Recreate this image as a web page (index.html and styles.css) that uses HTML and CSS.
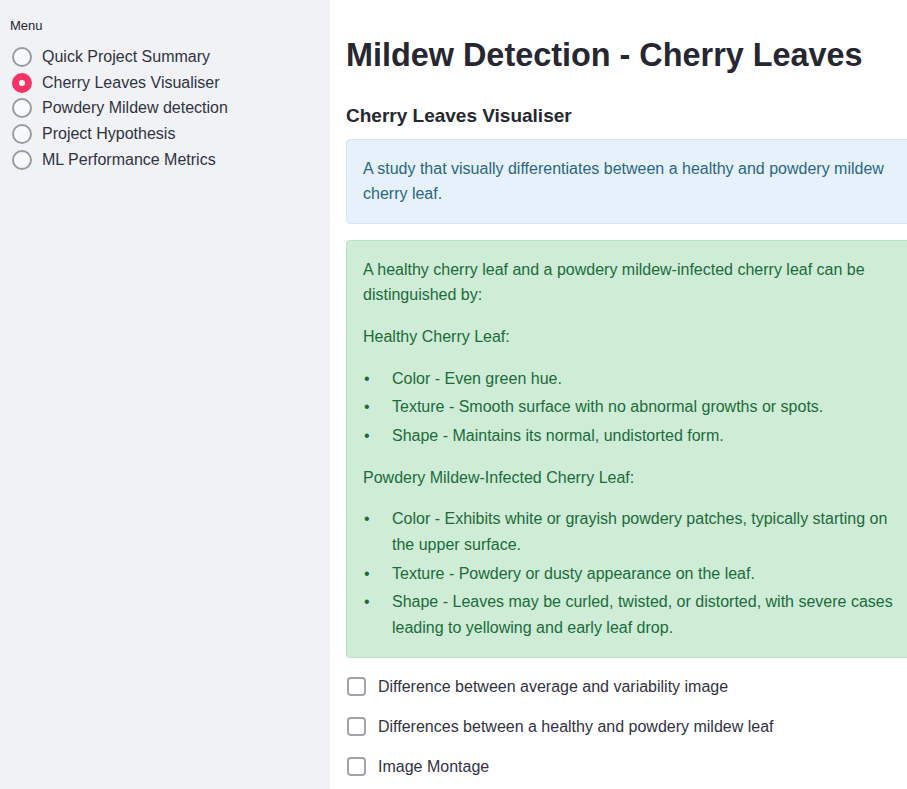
FILE: index.html
```html
<!DOCTYPE html>
<html lang="en">
<head>
<meta charset="utf-8">
<title>Mildew Detection - Cherry Leaves</title>
<link rel="stylesheet" href="styles.css">
</head>
<body>
<aside class="sidebar">
  <div class="menu-label">Menu</div>
  <div class="radio-group">
    <label class="radio"><span class="radio-dot"></span>Quick Project Summary</label>
    <label class="radio selected"><span class="radio-dot"></span>Cherry Leaves Visualiser</label>
    <label class="radio"><span class="radio-dot"></span>Powdery Mildew detection</label>
    <label class="radio"><span class="radio-dot"></span>Project Hypothesis</label>
    <label class="radio"><span class="radio-dot"></span>ML Performance Metrics</label>
  </div>
</aside>
<main class="main">
  <div class="content">
    <h1 class="title">Mildew Detection - Cherry Leaves</h1>
    <h3 class="subheader">Cherry Leaves Visualiser</h3>
    <div class="alert info">
      <p>A study that visually differentiates between a healthy and powdery mildew<br>cherry leaf.</p>
    </div>
    <div class="alert success">
      <p>A healthy cherry leaf and a powdery mildew-infected cherry leaf can be<br>distinguished by:</p>
      <p>Healthy Cherry Leaf:</p>
      <ul>
        <li><span>Color - Even green hue.</span></li>
        <li><span>Texture - Smooth surface with no abnormal growths or spots.</span></li>
        <li><span>Shape - Maintains its normal, undistorted form.</span></li>
      </ul>
      <p>Powdery Mildew-Infected Cherry Leaf:</p>
      <ul>
        <li><span>Color - Exhibits white or grayish powdery patches, typically starting on<br>the upper surface.</span></li>
        <li><span>Texture - Powdery or dusty appearance on the leaf.</span></li>
        <li><span>Shape - Leaves may be curled, twisted, or distorted, with severe cases<br>leading to yellowing and early leaf drop.</span></li>
      </ul>
    </div>
    <div class="checks">
      <label class="check"><span class="check-box"></span>Difference between average and variability image</label>
      <label class="check"><span class="check-box"></span>Differences between a healthy and powdery mildew leaf</label>
      <label class="check"><span class="check-box"></span>Image Montage</label>
    </div>
  </div>
</main>
</body>
</html>
```
FILE: styles.css
```css
html, body {
  margin: 0;
  padding: 0;
  height: 100%;
}
body {
  display: flex;
  overflow: hidden;
  font-family: "Liberation Sans", Arial, sans-serif;
  color: #262730;
  background: #ffffff;
}
.sidebar {
  flex: 0 0 330px;
  width: 330px;
  background: #f0f2f6;
  padding: 18px 0 0 10px;
  box-sizing: border-box;
}
.menu-label {
  font-size: 13px;
  line-height: 16px;
  color: #262730;
  margin-bottom: 10px;
}
.radio-group {
  display: flex;
  flex-direction: column;
  padding-left: 2px;
}
.radio {
  display: flex;
  align-items: center;
  height: 25.8px;
  font-size: 16px;
  color: #31333f;
}
.radio-dot {
  width: 20px;
  height: 20px;
  box-sizing: border-box;
  border-radius: 50%;
  border: 2px solid #9a9ba3;
  background: #f8f9fb;
  margin-right: 10px;
  display: flex;
  align-items: center;
  justify-content: center;
}
.radio.selected .radio-dot {
  background: #f63366;
  border-color: #f63366;
}
.radio.selected .radio-dot::after {
  content: "";
  width: 6px;
  height: 6px;
  border-radius: 50%;
  background: #ffffff;
}
.main {
  flex: 1 1 auto;
  min-width: 0;
  overflow: hidden;
  padding: 35px 0 0 16px;
}
.content {
  width: 720px;
}
.title {
  margin: 0 0 29px;
  font-size: 32.4px;
  line-height: 40.8px;
  font-weight: 700;
  color: #262730;
}
.subheader {
  margin: 0 0 11px;
  font-size: 19px;
  line-height: 22.8px;
  font-weight: 700;
  color: #262730;
}
.alert {
  border-radius: 4px;
  padding: 16px 16px;
  font-size: 16px;
  line-height: 25.6px;
  margin-bottom: 16px;
}
.alert p {
  margin: 0 0 16px;
}
.alert > :last-child {
  margin-bottom: 0;
}
.info {
  background: #e6f1fb;
  border: 1px solid #d5e6f5;
  color: #2a6781;
}
.success {
  background: #cfecd7;
  border: 1px solid #b7e2c4;
  color: #1b6b3b;
}
.alert ul {
  list-style: none;
  margin: 0 0 16px;
  padding: 0;
}
.alert li {
  display: flex;
}
.alert li + li {
  margin-top: 3.2px;
}
.alert li::before {
  content: "\2022";
  flex: 0 0 29px;
  padding-left: 1px;
  box-sizing: border-box;
}
.checks {
  display: flex;
  flex-direction: column;
  gap: 16px;
  padding-top: 1px;
}
.check {
  display: flex;
  align-items: center;
  height: 24px;
  font-size: 16px;
  color: #31333f;
}
.check-box {
  width: 19px;
  height: 19px;
  box-sizing: border-box;
  border: 2px solid #a3a3aa;
  border-radius: 4px;
  background: #ffffff;
  margin: 0 12px 0 1px;
}
```
